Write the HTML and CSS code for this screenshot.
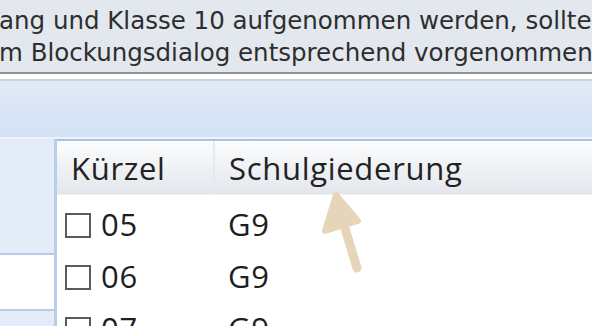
FILE: index.html
```html
<!DOCTYPE html>
<html lang="de">
<head>
    <meta charset="UTF-8">
    <meta name="viewport" content="width=device-width, initial-scale=1.0">
    <title>Blockung</title>
    <link rel="stylesheet" href="styles.css">
</head>
<body>
    <div class="notice">
        <p class="line">ang und Klasse 10 aufgenommen werden, sollte</p>
        <p class="line line-2">m Blockungsdialog entsprechend vorgenommen</p>
    </div>
    <div class="spacer"></div>
    <div class="toolbar"></div>
    <div class="main">
        <div class="side">
            <div class="side-top"></div>
            <div class="side-item"></div>
            <div class="side-rest"></div>
        </div>
        <div class="grid">
            <div class="row head">
                <div class="cell col-1">Kürzel</div>
                <div class="cell col-2">Schulgiederung</div>
            </div>
            <div class="row">
                <div class="cell col-1"><span class="check"></span>05</div>
                <div class="cell col-2">G9</div>
            </div>
            <div class="row">
                <div class="cell col-1"><span class="check"></span>06</div>
                <div class="cell col-2">G9</div>
            </div>
            <div class="row">
                <div class="cell col-1"><span class="check"></span>07</div>
                <div class="cell col-2">G9</div>
            </div>
        </div>
    </div>
    <svg class="arrow" width="60" height="90" viewBox="0 0 60 90">
        <line x1="46" y1="77" x2="30" y2="24" stroke="#e6d5b8" stroke-width="9" stroke-linecap="round"/>
        <polygon points="25,4 14,40 47,30" fill="#e6d5b8" stroke="#e6d5b8" stroke-width="6" stroke-linejoin="round"/>
    </svg>
</body>
</html>
```

FILE: styles.css
```css
body {
    margin: 0;
    width: 592px;
    height: 326px;
    overflow: hidden;
    position: relative;
    background-color: white;
}
.notice {
    height: 72px;
    background-color: #e3e8ef;
    border-bottom: 2px solid #929292;
    font-family: "DejaVu Sans", sans-serif;
    font-size: 24.5px;
    color: #2e2e2e;
    overflow: hidden;
}
.line {
    margin: 0;
    padding-top: 6px;
    line-height: 30px;
    white-space: nowrap;
    margin-left: -1px;
}
.line-2 {
    padding-top: 2px;
}
.spacer {
    height: 5px;
    background-color: white;
    border-bottom: 2px solid #cdd3dc;
}
.toolbar {
    height: 56px;
    background: linear-gradient(#e0e9f7, #d3e1f4);
    border-bottom: 2px solid #edf2fb;
}
.main {
    display: flex;
    height: 200px;
}
.side {
    width: 54px;
    background-color: #e4ecf9;
    border-right: 3px solid #b8cdea;
    display: flex;
    flex-direction: column;
}
.side-top {
    height: 114px;
}
.side-item {
    height: 54px;
    background-color: white;
    border-top: 2px solid #b4cbe9;
    border-bottom: 2px solid #b4cbe9;
}
.grid {
    flex: 1;
    border-top: 2px solid #a9c1e4;
    font-family: "Open Sans", sans-serif;
    font-size: 31px;
    letter-spacing: 0.7px;
    color: #1e1e1e;
    background-color: white;
}
.row {
    display: flex;
    height: 52px;
    align-items: center;
}
.row .cell {
    padding-top: 6px;
}
.head {
    height: 53px;
    background: linear-gradient(#fbfcfd, #e3e7ec);
    border-bottom: 1px solid #eef1f5;
    color: #222;
}
.head .cell {
    padding-top: 1px;
}
.cell {
    display: flex;
    align-items: center;
    height: 100%;
    box-sizing: border-box;
}
.col-1 {
    width: 158px;
    padding-left: 8px;
}
.head .col-1 {
    padding-left: 14px;
    border-right: 2px solid #e6eaef;
}
.col-2 {
    padding-left: 13px;
}
.head .col-2 {
    padding-left: 14px;
}
.check {
    display: inline-block;
    width: 22px;
    height: 21px;
    border: 2px solid #5a5a5a;
    margin-right: 10px;
    margin-top: 2px;
}
.arrow {
    position: absolute;
    left: 311px;
    top: 191px;
}
```
